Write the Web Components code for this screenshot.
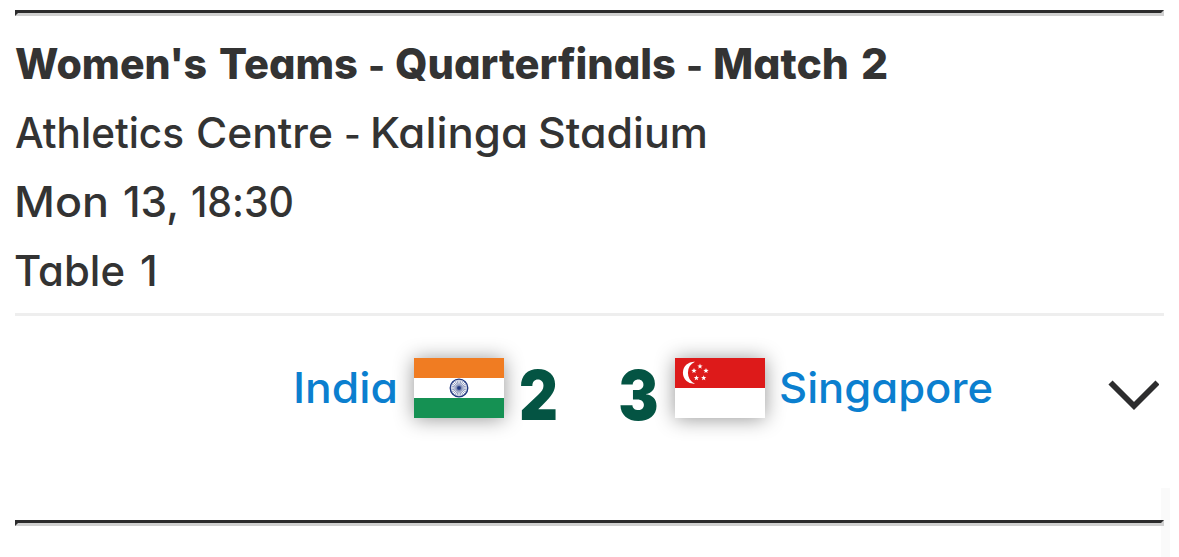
<!DOCTYPE html>
<html lang="en">
<head>
<meta charset="utf-8">
<title>Match result</title>
<style>
html { background: #fff; }
body { margin: 0; font-family: Inter, "Liberation Sans", sans-serif; color: #333; height: 557px; overflow: hidden; }
</style>
</head>
<body>
<match-card></match-card>
<script>
// A line of words; "words" lists the start and end of every word, in pixels from the line's left edge.
class TextLine extends HTMLElement {
  connectedCallback() {
    const root = this.attachShadow({ mode: 'open' });
    root.innerHTML = `<style>
      :host { display: block; white-space: pre; font-size: 42.6px; font-weight: 450; line-height: 69px; height: 69px; font-feature-settings: "cv11" 1, "calt" 0; }
      :host([bold]) { font-weight: 800; }
      span { display: inline-block; transform-origin: 0 50%; }
      .dash { font-size: .85em; }
    </style>`;
    const spans = this.getAttribute('words').split(' ').map(s => s.split(',').map(Number));
    this.getAttribute('text').split(' ').forEach((word, i) => {
      const el = document.createElement('span');
      el.textContent = word;
      if (word === '-') el.className = 'dash';
      if (i) root.append(' ');
      root.append(el);
      const [start, end] = spans[i];
      const natural = el.getBoundingClientRect().width;
      const at = el.getBoundingClientRect().left - this.getBoundingClientRect().left;
      el.style.marginLeft = start - at + 'px';
      if (word.length > 1) {
        el.style.width = end - start + 'px';
        el.style.transform = `scaleX(${(end - start) / natural})`;
      }
    });
  }
}
customElements.define('text-line', TextLine);

class HeavyRule extends HTMLElement {
  constructor() {
    super();
    this.attachShadow({ mode: 'open' }).innerHTML = `<style>
      :host { display: block; height: 0; border: 3px solid; border-color: #2b2b2c #d0d0d0 #d0d0d0 #2b2b2c; }
    </style>`;
  }
}
customElements.define('heavy-rule', HeavyRule);

const star = (x, y) => {
  let p = '';
  for (let i = 0; i < 10; i++) {
    const r = i % 2 ? 1.15 : 2.8, a = -Math.PI / 2 + i * Math.PI / 5;
    p += (x + r * Math.cos(a)).toFixed(2) + ',' + (y + r * Math.sin(a)).toFixed(2) + ' ';
  }
  return `<polygon fill="#fff" points="${p}"/>`;
};
const spokes = Array.from({ length: 12 }, (_, i) => `<path d="M45 21.5V38.500" transform="rotate(${i * 15} 45 30)"/>`).join('');
const flags = {
  india: `<path fill="#fff" d="M0 0h90v60H0z"/><path fill="#f07c22" d="M0 0h90v20H0z"/><path fill="#159153" d="M0 40h90v20H0z"/>
    <circle cx="45" cy="30" r="8.800" fill="none" stroke="#20377f" stroke-width="1.300"/>
    <g stroke="#20377f" stroke-width=".45">${spokes}</g><circle cx="45" cy="30" r="1.800" fill="#20377f"/>`,
  singapore: `<path fill="#fff" d="M0 0h90v60H0z"/><path fill="#dd1a1a" d="M0 0h90v30H0z"/>
    <path fill="#fff" d="M20 3.800A11.050 11.050 0 1 0 20 25.800A12.100 12.100 0 0 1 20 3.800z"/>
    ${star(25, 8.4)}${star(19, 12.8)}${star(31, 12.8)}${star(21.4, 20)}${star(28.700, 20)}`
};
class TeamFlag extends HTMLElement {
  connectedCallback() {
    this.attachShadow({ mode: 'open' }).innerHTML = `<style>
      :host { display: block; width: 90px; height: 60px; box-shadow: 0 1px 20px rgba(0,0,0,.42); }
      svg { display: block; }
    </style><svg width="90" height="60" viewBox="0 0 90 60">${flags[this.getAttribute('team')]}</svg>`;
  }
}
customElements.define('team-flag', TeamFlag);

class TeamScore extends HTMLElement {
  constructor() {
    super();
    this.attachShadow({ mode: 'open' }).innerHTML = `<style>
      :host { display: block; font: 900 68.500px/76px Inter, sans-serif; color: #045443; text-align: center; transform: translateX(.5px) scaleX(.88); }
    </style><slot></slot>`;
  }
}
customElements.define('team-score', TeamScore);

class MatchCard extends HTMLElement {
  constructor() {
    super();
    this.attachShadow({ mode: 'open' }).innerHTML = `<style>
      :host { display: block; padding: 10px 15px 0; }
      .info { padding-top: 13px; height: 284px; }
      .result { border-top: 3px solid #eee; height: 204px; display: grid; grid-template-columns: 277px 122px 90px 68px 32px 68px 3px 90px 14px 220px 105px 55px; }
      .name { color: #0b7fcf; margin-top: 37px; }
      team-flag { margin-top: 42px; }
      team-score { margin-top: 42px; }
      .chevron { margin-top: 59px; }
      .edge { position: absolute; left: 1161px; top: 488px; width: 9px; height: 69px; background: #fafafa; z-index: -1; }
    </style>
    <heavy-rule></heavy-rule>
    <div class="info">
      <text-line bold text="Women's Teams - Quarterfinals - Match 2" words="0,192 204,343 353,370 380,661 671,688 698,834 846,874"></text-line>
      <text-line text="Athletics Centre - Kalinga Stadium" words="0,169 181,318 329,345 355,513 523,693"></text-line>
      <text-line text="Mon 13, 18:30" words="-1,94 108,164 176,279"></text-line>
      <text-line text="Table 1" words="-1,110 125,144"></text-line>
    </div>
    <div class="result">
      <span></span>
      <text-line class="name" text="India" words="1,106"></text-line>
      <team-flag team="india"></team-flag>
      <team-score>2</team-score><span></span><team-score>3</team-score><span></span>
      <team-flag team="singapore"></team-flag><span></span>
      <text-line class="name" text="Singapore" words="0,214"></text-line>
      <span></span>
      <svg class="chevron" width="55" height="40" viewBox="0 0 55 40"><path d="M6.500 7.500L30 31L53.500 7.500" fill="none" stroke="#2d2d2e" stroke-width="5.800"/></svg>
    </div>
    <heavy-rule></heavy-rule>
    <div class="edge"></div>`;
  }
}
customElements.define('match-card', MatchCard);
</script>
</body>
</html>
